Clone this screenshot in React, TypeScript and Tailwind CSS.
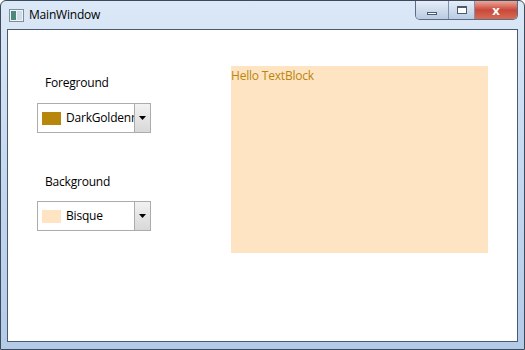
function ColorCombo({ swatch, label }: { swatch: string; label: string }) {
  return (
    <div className="flex h-[30px] w-[114px] border border-[#acacac] bg-white">
      <div className="flex flex-1 items-center gap-[5px] overflow-hidden pl-[4px]">
        <div className={`h-[13px] w-[19px] shrink-0 ${swatch}`} />
        <span className="whitespace-nowrap text-[12px] tracking-[-0.2px] text-black">{label}</span>
      </div>
      <div className="flex w-[16px] items-center justify-center border-l border-[#acacac] bg-gradient-to-b from-[#f2f2f2] to-[#d8d8d8]">
        <svg width="7" height="4" viewBox="0 0 7 4">
          <path d="M0 0h7L3.5 4z" fill="#000" />
        </svg>
      </div>
    </div>
  );
}

export default function App() {
  return (
    <div
      className="h-[350px] w-[525px] overflow-hidden rounded-t-[6px] border border-[#3c4a5c] bg-gradient-to-b from-[#dbe8f7] via-[#c5d8ef] to-[#b4cbe8] p-[6px] pt-0"
      style={{ fontFamily: '"Open Sans", "Noto Sans", sans-serif' }}
    >
      {/* title bar */}
      <div className="flex h-[28px] items-center">
        <div className="ml-[2px] flex h-[13px] w-[15px] items-center border border-[#7f8c99] bg-[#eef3f8] p-[1px]">
          <div className="h-full w-[5px] bg-[#4b8a7a]" />
          <div className="ml-[1px] h-full flex-1 bg-[#cfdcea]" />
        </div>
        <span className="ml-[5px] text-[12px] tracking-[-0.2px] text-black">MainWindow</span>
        <div className="ml-auto flex h-[19px] self-start overflow-hidden rounded-b-[5px] border border-t-0 border-[#5a6d85]">
          <div className="flex w-[33px] items-center justify-center border-r border-[#7d91aa] bg-gradient-to-b from-[#e6eef8] to-[#b9cbe2]">
            <div className="mt-[6px] h-[3px] w-[10px] border border-[#4a5a70] bg-white" />
          </div>
          <div className="flex w-[26px] items-center justify-center border-r border-[#7d91aa] bg-gradient-to-b from-[#e6eef8] to-[#b9cbe2]">
            <div className="h-[8px] w-[10px] border border-[#4a5a70] border-t-2 bg-white" />
          </div>
          <div className="flex w-[42px] items-center justify-center bg-gradient-to-b from-[#e9a79a] via-[#c9473a] to-[#d56c55]">
            <span className="text-[13px] font-bold leading-none text-white">x</span>
          </div>
        </div>
      </div>

      {/* client area */}
      <div className="flex h-[313px] border border-[#4a5a70] bg-white">
        <div className="flex w-[223px] flex-col pl-[29px] pt-[44px]">
          <span className="pl-[8px] text-[12px] tracking-[-0.2px] text-black">Foreground</span>
          <div className="mt-[11px]">
            <ColorCombo swatch="bg-[#b8860b]" label="DarkGoldenrod" />
          </div>
          <span className="mt-[40px] pl-[8px] text-[12px] tracking-[-0.2px] text-black">Background</span>
          <div className="mt-[10px]">
            <ColorCombo swatch="bg-[#ffe4c4]" label="Bisque" />
          </div>
        </div>
        <div className="pt-[36px]">
          <div className="h-[187px] w-[257px] bg-[#ffe4c4] text-[12px] leading-[19px] tracking-[-0.2px] text-[#b8860b]">
            Hello TextBlock
          </div>
        </div>
      </div>
    </div>
  );
}
